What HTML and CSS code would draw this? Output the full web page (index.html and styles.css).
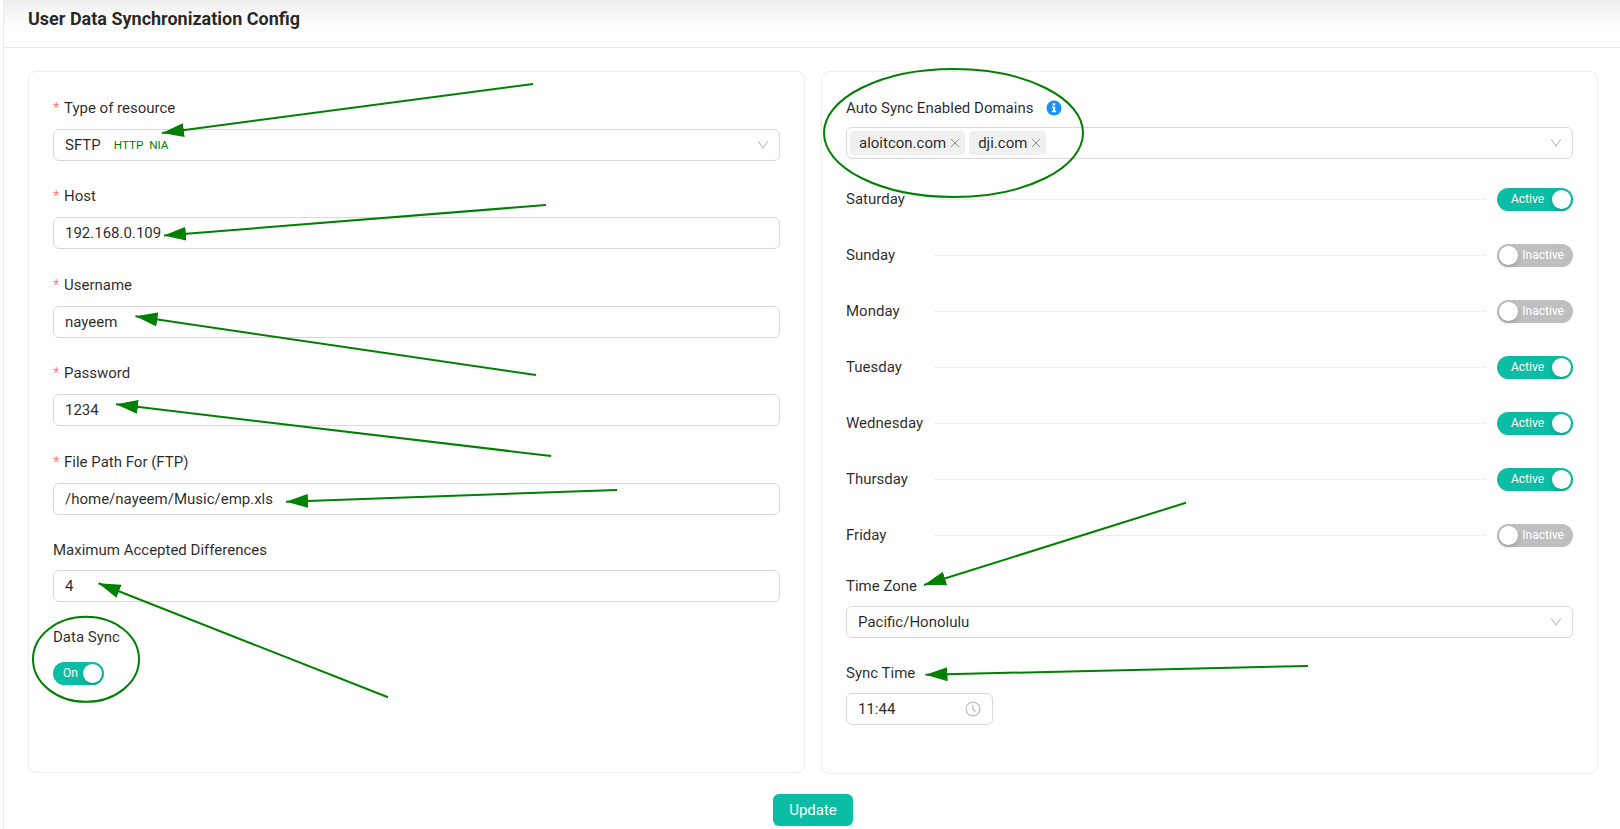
FILE: index.html
```html
<!DOCTYPE html>
<html lang="en">
<head>
<meta charset="utf-8">
<title>User Data Synchronization Config</title>
<link rel="stylesheet" href="styles.css">
</head>
<body>
<main class="page">
  <header class="page-header"><h1 class="title">User Data Synchronization Config</h1></header>
  <form class="columns">
    <section class="card card-left">
      <div class="field">
        <label class="label required">Type of resource</label>
        <div class="control"><span class="value">SFTP</span><span class="note">HTTP NIA</span><svg class="chevron" viewBox="0 0 12 12"><path d="M1.2 2.2 6 9 10.800 2.200"/></svg></div>
      </div>
      <div class="field">
        <label class="label required">Host</label>
        <div class="control"><span class="value">192.168.0.109</span></div>
      </div>
      <div class="field">
        <label class="label required">Username</label>
        <div class="control"><span class="value">nayeem</span></div>
      </div>
      <div class="field">
        <label class="label required">Password</label>
        <div class="control"><span class="value">1234</span></div>
      </div>
      <div class="field field-path">
        <label class="label required">File Path For (FTP)</label>
        <div class="control"><span class="value">/home/nayeem/Music/emp.xls</span></div>
      </div>
      <div class="field field-max">
        <label class="label">Maximum Accepted Differences</label>
        <div class="control"><span class="value">4</span></div>
      </div>
      <div class="field">
        <label class="label label-sync">Data Sync</label>
        <div class="switch switch-on switch-small"><span>On</span><i class="knob"></i></div>
      </div>
    </section>
    <section class="card">
      <div class="field field-domains">
        <label class="label label-domains">Auto Sync Enabled Domains
          <svg class="info" viewBox="0 0 16 16"><circle cx="8" cy="8" r="7.500"/><path d="M6.600 3.200h2.600v2H6.600zM5.900 6.500h3.300v4.200h1v1.600H5.900v-1.600h1V8.100h-1z"/></svg>
        </label>
        <div class="control control-tags">
          <span class="tag">aloitcon.com<svg class="close" viewBox="0 0 10 10"><path d="M1 1 9 9M9 1 1 9"/></svg></span>
          <span class="tag">dji.com<svg class="close" viewBox="0 0 10 10"><path d="M1 1 9 9M9 1 1 9"/></svg></span>
          <svg class="chevron" viewBox="0 0 12 12"><path d="M1.200 2.200 6 9 10.800 2.200"/></svg>
        </div>
      </div>
      <div class="days">
        <div class="day"><span class="day-name">Saturday</span><i class="dots"></i><div class="switch switch-on"><span>Active</span><i class="knob"></i></div></div>
        <div class="day"><span class="day-name">Sunday</span><i class="dots"></i><div class="switch switch-off"><i class="knob"></i><span>Inactive</span></div></div>
        <div class="day"><span class="day-name">Monday</span><i class="dots"></i><div class="switch switch-off"><i class="knob"></i><span>Inactive</span></div></div>
        <div class="day"><span class="day-name">Tuesday</span><i class="dots"></i><div class="switch switch-on"><span>Active</span><i class="knob"></i></div></div>
        <div class="day"><span class="day-name">Wednesday</span><i class="dots"></i><div class="switch switch-on"><span>Active</span><i class="knob"></i></div></div>
        <div class="day"><span class="day-name">Thursday</span><i class="dots"></i><div class="switch switch-on"><span>Active</span><i class="knob"></i></div></div>
        <div class="day"><span class="day-name">Friday</span><i class="dots"></i><div class="switch switch-off"><i class="knob"></i><span>Inactive</span></div></div>
      </div>
      <div class="field field-zone">
        <label class="label">Time Zone</label>
        <div class="control"><span class="value">Pacific/Honolulu</span><svg class="chevron" viewBox="0 0 12 12"><path d="M1.200 2.200 6 9 10.800 2.200"/></svg></div>
      </div>
      <div class="field">
        <label class="label">Sync Time</label>
        <div class="control control-time"><span class="value">11:44</span><svg class="clock" viewBox="0 0 16 16"><circle cx="8" cy="8" r="6.900"/><path d="M7.800 3.800v4.600l2.900 2"/></svg></div>
      </div>
    </section>
  </form>
  <footer class="actions"><button class="update" type="button">Update</button></footer>
</main>
<svg class="annotations" viewBox="0 0 1620 829">
  <defs><marker id="head" markerUnits="userSpaceOnUse" markerWidth="22" markerHeight="14" refX="22" refY="7" orient="auto"><path d="M0 0 22 7 0 14z"/></marker></defs>
  <g class="shape">
    <ellipse cx="953.500" cy="133" rx="129.500" ry="64"/>
    <ellipse cx="86" cy="659.300" rx="53" ry="42.500"/>
  </g>
  <g class="shape arrows">
    <path d="M533 84 162 133"/>
    <path d="M546 205 164 235.500"/>
    <path d="M536 375 135.500 316.300"/>
    <path d="M551 456 116 404.300"/>
    <path d="M617 490 286 501.700"/>
    <path d="M388 697.300 98.500 583.300"/>
    <path d="M1186 502.700 924 585"/>
    <path d="M1308 666 925.500 674.700"/>
  </g>
</svg>
</body>
</html>
```
FILE: styles.css
```css
* { box-sizing: border-box; }
body {
  margin: 0;
  background: #fff;
  color: rgba(0, 0, 0, .85);
  font: 15px/24px Roboto, "Liberation Sans", sans-serif;
  overflow: hidden;
}
.page { height: 829px; margin-left: 3px; border-left: 1px solid #ebebeb; }
.page-header {
  height: 48px;
  padding: 5px 0 0 24px;
  border-bottom: 1px solid #ececec;
  background: linear-gradient(#eee, #f6f6f6 12px, #fcfcfc 25px, #fff 36px);
}
.title { margin: 0; font-size: 18px; line-height: 28px; font-weight: 700; }
.columns { display: grid; grid-template-columns: 777px 777px; gap: 16px; padding: 23px 0 0 24px; align-items: start; }
.card { height: 703px; padding: 24px; border: 1px solid #eee; border-radius: 8px; }
.card-left { height: 702px; }
.field { height: 88.400px; }
.field-path { height: 88px; }
.field-max { height: 87px; }
.field-domains { height: 79px; }
.field-zone { height: 87px; }
.label { display: flex; align-items: center; height: 24px; margin-bottom: 9px; }
.field-max .label, .field-zone .label, .field-zone + .field .label { margin-bottom: 8px; }
.label-domains { margin-bottom: 7px; }
.label-sync { margin-bottom: 13px; }
.required::before { content: "*"; width: 7px; margin-right: 4px; color: #ff5a5c; font-weight: 300; }
.control {
  display: flex;
  align-items: center;
  height: 32px;
  padding: 0 11px;
  border: 1px solid #d9d9d9;
  border-radius: 6px;
  background: #fff;
}
.note { margin-left: 13px; color: green; font: 11.700px/24px Roboto, sans-serif; word-spacing: 3px; }
.chevron { width: 12px; height: 12px; margin: 0 -1px 0 auto; fill: none; stroke: #bfbfbf; stroke-width: 1.100; }
.control-tags { gap: 4px; padding-left: 3px; }
.tag { display: flex; align-items: center; height: 24px; padding: 0 5px 0 9px; border-radius: 4px; background: #f0f0f0; font-size: 15px; }
.close { width: 10px; height: 10px; margin-left: 4px; fill: none; stroke: #8c8c8c; }
.info { width: 16px; height: 16px; margin-left: 13px; }
.info circle { fill: #1890ff; }
.info path { fill: #fff; }
.day { display: flex; align-items: center; height: 56px; }
.days { margin-top: -4px; margin-bottom: 11px; }
.day-name { width: 89px; }
.dots { flex: 1; margin-right: 11px; border-top: 1px dotted #dedede; }
.switch {
  display: flex;
  align-items: center;
  justify-content: space-between;
  width: 76px;
  height: 23px;
  padding: 0 2px;
  border-radius: 12px;
  color: #fff;
  font-size: 12px;
}
.switch-on { background: #0abda4; padding-left: 14px; }
.switch-off { background: #bfbfbf; padding-right: 9px; }
.switch-small { width: 51px; padding-left: 10px; }
.knob { width: 19px; height: 19px; border-radius: 50%; background: #fff; box-shadow: 0 2px 4px rgba(0, 35, 11, .2); }
.control-time { width: 147px; }
.clock { width: 16px; height: 16px; margin-left: auto; fill: none; stroke: #bfbfbf; stroke-width: 1.300; }
.actions { display: flex; justify-content: center; padding: 20px 0 0 2px; }
.update { width: 80px; height: 32px; border: 0; border-radius: 6px; background: #0abda4; color: #fff; font: 15px/24px Roboto, sans-serif; }
.annotations { position: absolute; left: 0; top: 0; width: 1620px; height: 829px; pointer-events: none; }
.annotations marker path { fill: green; }
.shape { fill: none; stroke: green; stroke-width: 2; }
.arrows path { marker-end: url(#head); }
```
